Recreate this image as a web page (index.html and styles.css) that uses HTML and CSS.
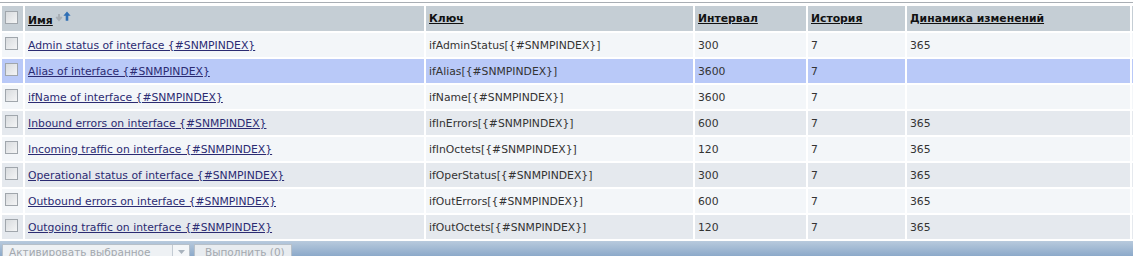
FILE: index.html
```html
<!DOCTYPE html>
<html>
<head>
<meta charset="utf-8">
<link rel="stylesheet" href="styles.css">
</head>
<body>
<div class="page">
  <div class="topline"></div>
  <table class="list">
    <colgroup>
      <col class="c-cb"><col class="c-name"><col class="c-key"><col class="c-int"><col class="c-hist"><col class="c-trend"><col class="c-extra">
    </colgroup>
    <thead>
      <tr class="head">
        <td class="cb"><span class="box"></span></td>
        <td><a class="hl">Имя</a><svg class="sort" width="18" height="12" viewBox="0 0 18 12"><path d="M4 3v5.5M1.3 5.8L4 9 6.7 5.8" stroke="#a9afb5" stroke-width="2" fill="none"/><path d="M12 0.5l-3.6 4.2h2.3v5h2.6v-5h2.3z" fill="#2f6fb5"/></svg></td>
        <td><a class="hl">Ключ</a></td>
        <td><a class="hl">Интервал</a></td>
        <td><a class="hl">История</a></td>
        <td><a class="hl">Динамика изменений</a></td>
        <td></td>
      </tr>
    </thead>
    <tbody>
      <tr class="odd"><td class="cb"><span class="box"></span></td><td><a class="lnk">Admin status of interface {#SNMPINDEX}</a></td><td>ifAdminStatus[{#SNMPINDEX}]</td><td>300</td><td>7</td><td>365</td><td></td></tr>
      <tr class="sel"><td class="cb"><span class="box"></span></td><td><a class="lnk">Alias of interface {#SNMPINDEX}</a></td><td>ifAlias[{#SNMPINDEX}]</td><td>3600</td><td>7</td><td></td><td></td></tr>
      <tr class="odd"><td class="cb"><span class="box"></span></td><td><a class="lnk">ifName of interface {#SNMPINDEX}</a></td><td>ifName[{#SNMPINDEX}]</td><td>3600</td><td>7</td><td></td><td></td></tr>
      <tr class="even"><td class="cb"><span class="box"></span></td><td><a class="lnk">Inbound errors on interface {#SNMPINDEX}</a></td><td>ifInErrors[{#SNMPINDEX}]</td><td>600</td><td>7</td><td>365</td><td></td></tr>
      <tr class="odd"><td class="cb"><span class="box"></span></td><td><a class="lnk">Incoming traffic on interface {#SNMPINDEX}</a></td><td>ifInOctets[{#SNMPINDEX}]</td><td>120</td><td>7</td><td>365</td><td></td></tr>
      <tr class="even"><td class="cb"><span class="box"></span></td><td><a class="lnk">Operational status of interface {#SNMPINDEX}</a></td><td>ifOperStatus[{#SNMPINDEX}]</td><td>300</td><td>7</td><td>365</td><td></td></tr>
      <tr class="odd"><td class="cb"><span class="box"></span></td><td><a class="lnk">Outbound errors on interface {#SNMPINDEX}</a></td><td>ifOutErrors[{#SNMPINDEX}]</td><td>600</td><td>7</td><td>365</td><td></td></tr>
      <tr class="even"><td class="cb"><span class="box"></span></td><td><a class="lnk">Outgoing traffic on interface {#SNMPINDEX}</a></td><td>ifOutOctets[{#SNMPINDEX}]</td><td>120</td><td>7</td><td>365</td><td></td></tr>
    </tbody>
  </table>
  <div class="footer">
    <div class="select"><span class="select-text">Активировать выбранное</span><span class="select-arrow"><svg width="7" height="4" viewBox="0 0 7 4"><path d="M0 0h7L3.5 4z" fill="#a9b3bd"/></svg></span></div>
    <div class="button">Выполнить (0)</div>
  </div>
</div>
</body>
</html>
```
FILE: styles.css
```css
html, body {
  margin: 0;
  padding: 0;
  background: #ffffff;
  overflow: hidden;
}
.page {
  width: 1133px;
  height: 256px;
  overflow: hidden;
  padding-top: 2px;
  box-sizing: border-box;
  font-family: "DejaVu Sans", Verdana, sans-serif;
  font-size: 10.8px;
  color: #333333;
}
.topline {
  height: 0;
  border-top: 1px solid #a9aeb4;
  width: 1133px;
}
.list {
  table-layout: fixed;
  border-collapse: separate;
  border-spacing: 2px;
  width: 1233px;
  margin-top: 1px;
}
.c-cb { width: 21px; }
.c-name { width: 399px; }
.c-key { width: 267px; }
.c-int { width: 111px; }
.c-hist { width: 97px; }
.c-trend { width: 223px; }
.c-extra { width: 100px; }
.list td {
  padding: 0;
  text-indent: 3px;
  height: 24px;
  white-space: nowrap;
  overflow: hidden;
  vertical-align: middle;
}
.list td.cb {
  text-indent: 0;
}
.head td {
  background: #c5ced5;
  height: 25px;
}
.odd td { background: #f3f6f9; }
.even td { background: #e5e9ee; }
.sel td { background: #b9c9f8; }
.box {
  display: block;
  width: 11px;
  height: 11px;
  margin-left: 3px;
  border: 1px solid #a0a6ac;
  background: linear-gradient(135deg, #d8dbde, #f4f5f6);
  margin-top: -3px;
}
.hl {
  font-weight: bold;
  color: #111111;
  text-decoration: underline;
}
.sort {
  vertical-align: 1px;
  margin-left: 2px;
}
.lnk {
  color: #2b2b72;
  text-decoration: underline;
}
.footer {
  height: 20px;
  background: linear-gradient(#b8cadd, #7d9ec3);
  display: flex;
  align-items: flex-start;
  padding: 3px 0 0 2px;
  gap: 4px;
  box-sizing: border-box;
}
.select {
  display: flex;
  height: 16px;
  border: 1px solid #b7c0c9;
  background: #eef1f4;
  box-sizing: border-box;
}
.select-text {
  width: 169px;
  padding-left: 6px;
  box-sizing: border-box;
  color: #a3a8ae;
  font-size: 10.5px;
  line-height: 15px;
  white-space: nowrap;
}
.select-arrow {
  width: 16px;
  border-left: 1px solid #c3cbd3;
  display: flex;
  align-items: center;
  justify-content: center;
  background: #f4f6f8;
}
.button {
  height: 16px;
  width: 98px;
  border: 1px solid #b7c0c9;
  background: #e8ecf0;
  color: #a3a8ae;
  font-size: 10.5px;
  line-height: 15px;
  padding-left: 10px;
  box-sizing: border-box;
  white-space: nowrap;
}
```
